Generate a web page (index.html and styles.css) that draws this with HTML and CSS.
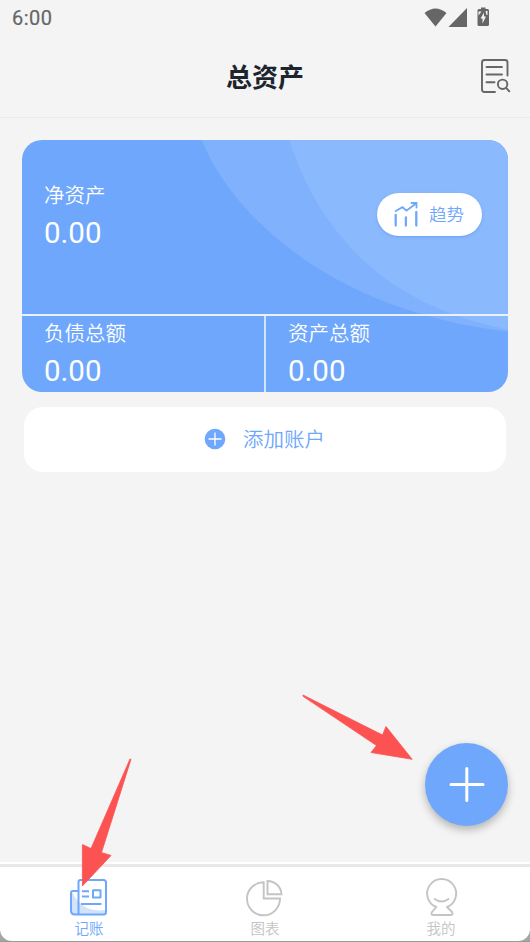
FILE: index.html
```html
<!DOCTYPE html>
<html lang="zh-CN">
<head>
<meta charset="utf-8">
<meta name="viewport" content="width=device-width, initial-scale=1">
<title>总资产</title>
<link rel="stylesheet" href="styles.css">
</head>
<body>
<div class="app">
  <div class="status">
    <span class="clock">6:00</span>
    <svg class="status-icons" width="66" height="22" viewBox="424 6 66 22" fill="#666">
      <path d="M424.5 13Q435.500 4 446.500 13L435.500 26.500Z"/>
      <path d="M467 8V27H448.500Z"/>
      <path d="M479 9H481V7.500H485.500V9H487.500Q489 9 489 10.500V24.500Q489 26 487.500 26H479Q477.500 26 477.500 24.500V10.500Q477.500 9 479 9Z"/>
      <path fill="#f4f4f4" d="M484 12.500V16.500H486L482.500 23.500V18.500H480.500ZM478.500 11.500H481.500L478.500 15.500ZM485.500 11H487.500V15H486.500Z"/>
    </svg>
  </div>
  <header class="header">
    <h1>总资产</h1>
    <svg class="search-icon" width="32" height="36" viewBox="480 58 32 36" fill="none" stroke="#666" stroke-width="1.900" stroke-linecap="round">
      <path d="M495 92H484.500Q482 92 482 89.500V62.500Q482 60 484.500 60H505Q507.500 60 507.500 62.500V75.500M486.500 67H502M486.500 74.500H502M486.500 82.300H494.500"/>
      <circle cx="502.600" cy="84.300" r="4.700"/><path d="M506.100 87.800L509.300 91.300"/>
    </svg>
  </header>
  <main class="content">
    <section class="card">
      <svg class="waves" width="486" height="252" viewBox="22 140 486 252">
        <path fill="#80b1fc" d="M201.500 140C239 230 350 314 508 331.500V140Z"/>
        <path fill="#8bb9fd" d="M289.300 140C320 235 387 306 508 329.500V140Z"/>
      </svg>
      <div class="net">
        <div class="item">
          <div class="label">净资产</div>
          <div class="value">0.00</div>
        </div>
        <button class="trend">
          <svg width="26" height="26" viewBox="393 201 26 26" fill="none" stroke="#6ea7fb" stroke-width="2.300" stroke-linecap="round">
            <path d="M395.700 215V225.500M405.900 217.500V225.500M416.300 212V225.500"/>
            <path stroke-width="1.800" d="M395.700 211L402.500 207.200L406.500 210.700L416 203.500M411.500 203H416.500V207.500"/>
          </svg>
          <span>趋势</span>
        </button>
      </div>
      <div class="totals">
        <div class="item"><div class="label">负债总额</div><div class="value">0.00</div></div>
        <div class="item"><div class="label">资产总额</div><div class="value">0.00</div></div>
      </div>
    </section>
    <button class="add">
      <svg width="22" height="22" viewBox="0 0 22 22"><circle cx="11" cy="11" r="10.300" fill="#6ea7fb"/><path d="M4.500 11H17.500M11 4.500V17.500" stroke="#fff" stroke-width="1.300"/></svg>
      <span>添加账户</span>
    </button>
  </main>
  <nav class="nav">
    <div class="tabs">
      <a class="tab active">
        <svg width="40" height="40" viewBox="69 878 40 40" fill="none" stroke="#6ea7fb" stroke-width="2" stroke-linejoin="round">
          <path fill="#d3e3fa" stroke="none" d="M72 892Q82 913 105 910V914H72Z"/>
          <path d="M78.500 914.300V882Q78.500 880 80.500 880H103.500Q106 880 106 882.500V912Q106 914.500 103.500 914.500H75Q71 914.500 71 910.500V893Q71 891 73 891H78.500"/>
          <path d="M82 891.300H89M82 896.500H89M81 904H101.500M93 890.200H100.500V897.500H93Z"/>
        </svg>
        <span>记账</span>
      </a>
      <a class="tab">
        <svg width="40" height="40" viewBox="245 878 40 40" fill="none" stroke="#c4c4c4" stroke-width="1.900">
          <path d="M263.700 882.300A16.500 16.500 0 1 0 280 898.500H263.700Z"/>
          <path d="M267.500 881V894.200H281.500A14 14 0 0 0 267.500 881Z"/>
        </svg>
        <span>图表</span>
      </a>
      <a class="tab">
        <svg width="40" height="40" viewBox="421 878 40 40" fill="none" stroke="#c4c4c4" stroke-width="1.900" stroke-linecap="round" stroke-linejoin="round">
          <path d="M436.300 907A14.500 14.500 0 1 1 447 907L452 912Q453.500 915 451 915H433Q430.500 915 432 912L436.300 907M434.700 899Q441.500 904 448.500 899"/>
        </svg>
        <span>我的</span>
      </a>
    </div>
  </nav>
  <button class="fab" aria-label="添加">
    <svg width="36" height="36" viewBox="0 0 36 36" stroke="#fff" stroke-width="3" stroke-linecap="round"><path d="M2 17.500H34M17.800 1.500V33.500"/></svg>
  </button>
  <svg class="arrows" width="530" height="942" viewBox="0 0 530 942" fill="#fc5252" stroke="#fc5252" stroke-width=".8" stroke-linejoin="round">
    <path d="M303 695L382.500 735L386 726.500L412.200 759.300L371 752.500L376.500 745.500L303 696.300Z"/>
    <path d="M130 759L91 848.500L82.400 844.500V886L111 855.500L101.500 852.500L131 759.300Z"/>
  </svg>
</div>
</body>
</html>
```
FILE: styles.css
```css
* { box-sizing: border-box; }
body {
  margin: 0;
  background: #a5a5a5;
  font-family: Roboto, "Noto Sans CJK SC", sans-serif;
}
button { border: 0; padding: 0; font: inherit; }
svg { display: block; }
.app {
  position: relative;
  width: 530px;
  height: 942px;
  display: flex;
  flex-direction: column;
  overflow: hidden;
}
.status {
  height: 36px;
  padding: 6px 40px 0 12px;
  display: flex;
  justify-content: space-between;
  background: #f4f4f4;
}
.clock {
  color: #666;
  font-size: 20px;
  line-height: 25px;
  letter-spacing: .5px;
  -webkit-text-stroke: .2px #666;
}
.header {
  height: 82px;
  padding: 0 18px 0 50px;
  display: flex;
  align-items: center;
  background: #f4f4f4;
  border-bottom: 1px solid #eaeaea;
}
.header h1 {
  flex: 1;
  margin: 2px 0 0;
  text-align: center;
  font-size: 26px;
  line-height: 38px;
  font-weight: 700;
  color: #1c252e;
}
.search-icon { margin-bottom: 1px; }
.content {
  flex: 1;
  padding: 22px 22px 0;
  background: #f4f4f4;
}
.card {
  position: relative;
  height: 252px;
  border-radius: 20px;
  overflow: hidden;
  background: #6ea7fb;
  color: #fff;
}
.waves { position: absolute; inset: 0; }
.net {
  position: relative;
  height: 176px;
  padding: 40px 26px 0 22px;
  display: flex;
  justify-content: space-between;
  border-bottom: 2px solid #e9f1fe;
}
.label { font-size: 20.5px; line-height: 32px; font-weight: 350; }
.value { font-size: 29.500px; line-height: 42px; font-weight: 380; }
.trend {
  width: 105px;
  height: 43px;
  margin-top: 13px;
  padding-left: 16px;
  display: flex;
  align-items: center;
  gap: 10px;
  border-radius: 22px;
  background: #fff;
  color: #6ea7fb;
  font-size: 17.500px;
  font-weight: 350;
  box-shadow: 0 1px 3px #518be088;
}
.trend svg { margin-bottom: 1px; }
.trend span { margin-bottom: 2px; }
.totals {
  position: relative;
  display: grid;
  grid-template-columns: 244px 1fr;
  height: 76px;
}
.totals .item { padding: 2px 0 0 22px; }
.totals .item:first-child { border-right: 2px solid #d3e4fe; }
.add {
  width: 482px;
  height: 65px;
  margin: 15px 0 0 2px;
  padding: 0 1px 1px 0;
  display: flex;
  justify-content: center;
  align-items: center;
  gap: 17px;
  border-radius: 19px;
  background: #fff;
  color: #6ea7fb;
  font-size: 20.500px;
  font-weight: 350;
}
.add span { margin-bottom: 2px; }
.nav {
  height: 80px;
  border-top: 2px solid #fff;
  border-bottom: 1px solid #999;
  background: linear-gradient(#f4f4f4 50%, #a5a5a5 50%);
}
.tabs {
  height: 77px;
  display: grid;
  grid-template-columns: 178px 174px 178px;
  border-top: 3px solid #e8e8e8;
  border-radius: 0 0 12px 12px;
  background: #fff;
}
.tab {
  padding-top: 11px;
  display: flex;
  flex-direction: column;
  align-items: center;
  color: #c4c4c4;
  font-size: 14.500px;
  font-weight: 350;
  line-height: 24px;
}
.active { color: #6ea7fb; }
.fab {
  position: absolute;
  left: 425px;
  top: 743px;
  width: 83px;
  height: 83px;
  display: grid;
  place-items: center;
  border-radius: 50%;
  background: #6ea7fb;
  box-shadow: 0 4px 9px #0004;
}
.arrows { position: absolute; inset: 0; pointer-events: none; }
```
